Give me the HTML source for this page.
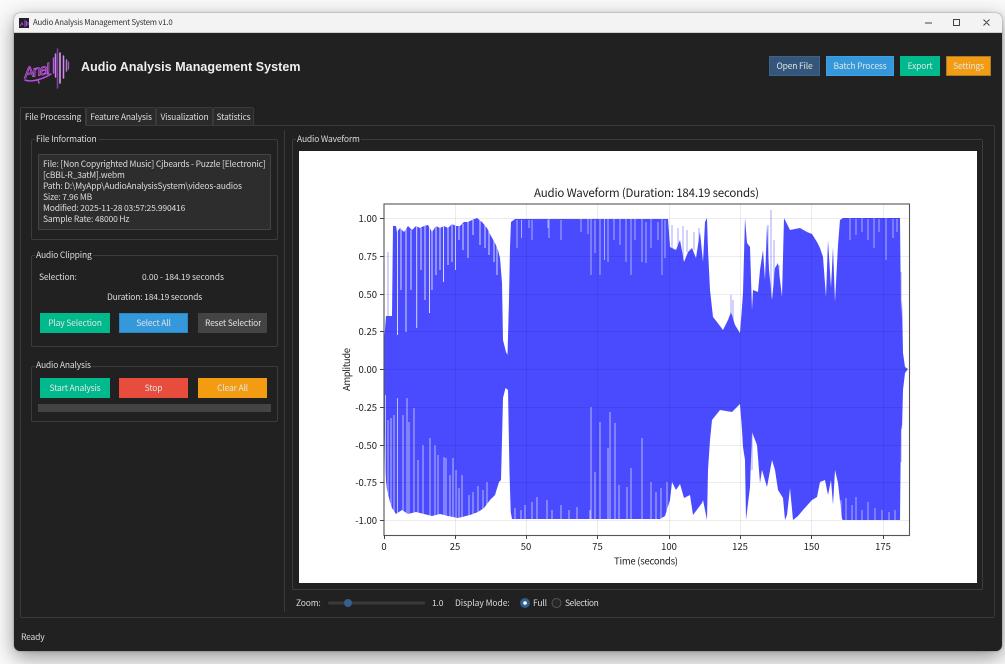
<!DOCTYPE html>
<html lang="en"><head><meta charset="utf-8"><title>Audio Analysis Management System v1.0</title>
<style>
html,body{margin:0;padding:0;width:1005px;height:664px;overflow:hidden;background:#fafafa}
body{position:relative;font-family:"Noto Sans CJK SC","Liberation Sans",sans-serif;font-size:8.5px;letter-spacing:-.17px;color:#dcdcdc;filter:blur(.3px)}
.a{position:absolute;box-sizing:border-box}
.t{position:absolute;white-space:nowrap;line-height:12px;height:12px}
.win{left:13.5px;top:13px;width:988px;height:638px;background:#212121;border-radius:6px;box-shadow:0 6px 20px rgba(0,0,0,.42),0 0 2px rgba(0,0,0,.35)}
.bar{left:13.5px;top:13px;width:988px;height:20px;background:#f3f3f3;border-radius:6px 6px 0 0;border-bottom:1px solid #d0d0d0}
.btn{position:absolute;box-sizing:border-box;height:20px;line-height:21px;text-align:center;color:#dfe6e6;white-space:nowrap;overflow:hidden}
.bd{line-height:19px}
.tab{position:absolute;box-sizing:border-box;top:107px;height:18px;line-height:18px;text-align:center;background:#2a2a2a;border:1px solid #3a3a3a;border-bottom:0;border-radius:2px 2px 0 0;color:#dcdcdc;white-space:nowrap}
.g{position:absolute;box-sizing:border-box;border:1px solid #3c3c3c;border-radius:2px}
.l{position:absolute;background:#212121;padding:0 1px;line-height:12px;white-space:nowrap;color:#dcdcdc}
</style></head><body>
<div class="a win"></div>
<div class="a bar"></div>
<svg class="a" style="left:19px;top:18px" width="10" height="10" viewBox="0 0 10 10"><rect width="10" height="10" fill="#23202a"/><path d="M1 8l2-3 1 2M6 2v7M7.500 3v5M9 4v3" stroke="#a64fd0" stroke-width="1" fill="none"/></svg>
<div class="t" style="left:33px;top:17px;color:#333;font-size:7.8px;letter-spacing:-.2px">Audio Analysis Management System v1.0</div>
<svg class="a" style="left:920px;top:16px" width="75" height="14" viewBox="0 0 75 14" fill="none" stroke="#444"><path d="M5 7h7M33.500 3.500h6v6h-6zM63.500 3.500l6 6m0-6l-6 6"/></svg>

<svg class="a" style="left:20px;top:44px" width="55" height="48" viewBox="20 44 55 48">
<g stroke-linecap="round" fill="none">
<path d="M53.500 58V73" stroke="#b85ae0" stroke-width="1.400"/><path d="M55.500 54V77" stroke="#d080ee" stroke-width="1.500"/><path d="M57.500 49V88" stroke="#7a44a8" stroke-width="1.500"/><path d="M60 53V83" stroke="#e09cf4" stroke-width="1.600"/><path d="M63.500 56V78" stroke="#d48cf0" stroke-width="1.500"/><path d="M66.500 60V71" stroke="#b870dc" stroke-width="1.500"/><path d="M68.500 62V69" stroke="#9a58c0" stroke-width="1.300"/>
<path d="M25 80C32 83 45 78 51 74M38 80l1 3" stroke="#b850dc" stroke-width="1.500"/>
</g>
<text transform="translate(25,78) rotate(-10)" font-family="'Liberation Sans',sans-serif" font-size="15" font-style="italic" fill="none" stroke="#c558e6" stroke-width=".8" textLength="26" letter-spacing="0">Anal</text>
</svg>
<div class="t" style="left:81px;top:59px;height:16px;font:bold 12.500px/16px 'Liberation Sans',sans-serif;color:#f0f0f0;letter-spacing:.06px">Audio Analysis Management System</div>

<div class="btn bd" style="left:769px;top:56px;width:51px;background:#34567a;border:1px solid #3d6288">Open File</div>
<div class="btn bd" style="left:826px;top:56px;width:68px;background:#3498db;border:1px solid #3f9fe0">Batch Process</div>
<div class="btn" style="left:900px;top:56px;width:40px;background:#00b98d">Export</div>
<div class="btn bd" style="left:946px;top:56px;width:45px;background:#f39c12;border:1px solid #a87a30">Settings</div>

<div class="a" style="left:20px;top:125px;width:975px;height:493px;border:1px solid #3a3a3a;border-radius:2px"></div>
<div class="tab" style="left:20px;width:66px;background:#212121;border-bottom:1px solid #212121;height:19px">File Processing</div>
<div class="tab" style="left:86px;width:70px">Feature Analysis</div>
<div class="tab" style="left:156px;width:57px">Visualization</div>
<div class="tab" style="left:213px;width:41px">Statistics</div>

<div class="a" style="left:284px;top:130px;width:1px;height:482px;background:#3a3a3a"></div>

<div class="g" style="left:31px;top:139px;width:247px;height:101px"></div>
<div class="l" style="left:35px;top:133px">File Information</div>
<div class="a" style="left:38px;top:154px;width:233px;height:76px;background:#2d2d2d;border:1px solid #444"></div>
<div class="t" style="left:43px;top:158px">File: [Non Copyrighted Music] Cjbeards - Puzzle [Electronic]</div>
<div class="t" style="left:43px;top:169px">[cBBL-R_3atM].webm</div>
<div class="t" style="left:43px;top:180px">Path: D:\MyApp\AudioAnalysisSystem\videos-audios</div>
<div class="t" style="left:43px;top:191px">Size: 7.96 MB</div>
<div class="t" style="left:43px;top:202px">Modified: 2025-11-28 03:57:25.990416</div>
<div class="t" style="left:43px;top:213px">Sample Rate: 48000 Hz</div>

<div class="g" style="left:31px;top:255px;width:247px;height:92px"></div>
<div class="l" style="left:35px;top:249px">Audio Clipping</div>
<div class="t" style="left:39px;top:271px">Selection:</div>
<div class="t" style="left:142px;top:271px;letter-spacing:-.08px">0.00 - 184.19 seconds</div>
<div class="t" style="left:107px;top:291px">Duration: 184.19 seconds</div>
<div class="btn" style="left:40px;top:313px;width:70px;background:#00b98d">Play Selection</div>
<div class="btn bd" style="left:119px;top:313px;width:69px;background:#3498db;border:1px solid #2e86c1">Select All</div>
<div class="btn" style="left:198px;top:313px;width:69px;background:#444;text-align:left;padding-left:7px"><span style="display:block;width:56px;overflow:hidden">Reset Selection</span></div>

<div class="g" style="left:31px;top:366px;width:247px;height:56px"></div>
<div class="l" style="left:35px;top:359px">Audio Analysis</div>
<div class="btn" style="left:40px;top:378px;width:70px;background:#00b98d">Start Analysis</div>
<div class="btn" style="left:119px;top:378px;width:69px;background:#e74c3c">Stop</div>
<div class="btn" style="left:198px;top:378px;width:69px;background:#f39c12">Clear All</div>
<div class="a" style="left:38px;top:404px;width:233px;height:8px;background:#444"></div>

<div class="g" style="left:292px;top:139px;width:691px;height:451px"></div>
<div class="l" style="left:296px;top:133px">Audio Waveform</div>
<div class="a" style="left:299px;top:151px;width:678px;height:432px;background:#fff"></div>

<svg class="a" style="left:0;top:0;letter-spacing:0" width="1005" height="664" viewBox="0 0 1005 664">
<polygon fill="#4a4aff" points="384,342 386,316 392,316 393,226 396,226 397,232 400,228 404,232 408,226 412,230 416,226 420,228 424,226 428,225 432,232 436,226 440,228 444,226 448,228 452,224 456,226 460,226 464,222 468,222 472,220 477,218 482,222 487,228 491,236 495,243 498,250 500,258 502,283 503,340 506,352 507.500,355 509,300 510,247 511,222 515,219 668,219 670,247 676,250 680,240 684,262 688,252 692,248 696,258 700,232 703,262 705,222 707,218 708,250 710,290 713,317 717,322 723,330 728,320 731,312 735,325 740,333 742,307 743,293 745,218 747,243 750,247 752,310 753,290 758,292 760,270 763,250 765,280 767,225 769,270 772,300 775,268 778,263 782,297 784,218 790,230 800,228 807,232 812,234 817,242 820,248 823,257 826,297 828,240 831,288 833,247 835,302 838,245 840,220 843,218 900,218 901,318 902,300 903,353 905,367 908,369 905,373 903,390 902,430 901,425 900,520 843,520 842,519 838,483 835,470 833,505 831,480 828,495 825,480 820,482 817,497 812,500 803,510 798,516 793,520 790,488 787,515 785,520 783,498 778,490 775,470 772,460 767,487 762,470 760,483 757,445 752,432 750,487 746,520 745,460 743,447 742,430 740,404 732,412 720,410 712,420 710,440 708,470 707,520 703,500 702,503 693,515 690,495 684,498 680,484 676,490 672,482 670,500 665,516 660,519 512,519 510.700,512 509.500,472 508,390 505.500,388 503,398 502,440 501,480 499,482 495,495 490,500 484,508 478,512 470,515 458,518 448,516 440,514 432,516 424,514 416,512 408,514 402,510 396,514 392,508 390,502 387,490 385,472 384,395"/>
<path fill="none" stroke="#fff" stroke-opacity=".78" stroke-width="1" d="M397.500 226V335M401 228V290M406 228V332M411 230V290M416.700 226V328M421 228V270M425 226V300M429.500 225V313M432 228V290M436 226V275M440 228V270M443.500 226V282M448 228V265M452 224V262M455.500 226V270M459 226V240M463 224V250M468 222V258M473 220V235M480 220V245M485 222V248M489 230V255M494 234V262M497 240V275"/>
<path fill="none" stroke="#fff" stroke-opacity=".55" stroke-width="1" d="M517 220V248M521.500 220V238M529 220V228M532 220V240M548 220V228M549 219V238M561 220V240M581 219V232M588 219V234M591 218V275M595 220V253M600 218V275M604.500 219V260M608 218V262M614 218V240M620 218V245M626 218V262M631 218V275M635 219V240M642 218V262M646 222V263M651 219V248M658 222V240M662 218V275M665 220V258"/>
<path fill="none" stroke="#fff" stroke-opacity=".62" stroke-width="1" d="M385.500 520V395M388 520V420M391 520V418M394 520V415M397.500 520V398M403 520V415M407 520V398M409 520V422M414 520V408M418 520V460M423 520V445M430 520V438M435 520V445M438 520V455M444 520V457M446 520V458M450 520V475M453 520V458M456 520V470M459 520V488M462 520V475M469 520V495M473 520V492M478 520V486M483 520V490M487 520V482M515 520V508M521 520V510M525 520V505M532 520V502M537 520V497M547 520V500M552 520V510M561 520V505M569 520V510M577 520V507M590 520V510M591 520V407M595 520V472M600 520V422M608 520V448M610 520V412M615 520V423M619 520V485M627 520V487M631 520V468M642 520V438M651 520V482M656 520V492M661 520V488M667 520V482"/>
<path fill="none" stroke="#fff" stroke-opacity=".55" stroke-width="1" d="M850 218V240M856 219V235M862 218V232M868 219V240M874 218V248M879 219V232M886 218V260M893 219V238M897 219V232M841 519V500M846 520V498M852 520V505M856 520V497M862 520V510M868 520V502M875 520V508M882 520V510M889 520V512M895 520V510"/>
<path fill="none" stroke="#4a4aff" stroke-opacity=".5" stroke-width="1" d="M388 252V316M901 272V318M901 427V462M668 227V240M672 225V250M678 228V250M683 226V262M687 230V252M694 232V250M699 228V258M731 295V320M733 300V330M768 225V270M771 210V300M774 240V310M779 265V300M752 428V470"/>
<g stroke="#000" stroke-opacity=".075" stroke-width="1" fill="none">
<path d="M384 218.500H910M384 256.500H910M384 294.500H910M384 331.500H910M384 369.500H910M384 407.500H910M384 445.500H910M384 482.500H910M384 520.500H910"/>
<path d="M455.500 204V535M526.500 204V535M597.500 204V535M669.500 204V535M740.500 204V535M811.500 204V535M883.500 204V535"/>
</g>
<rect x="384" y="204" width="525.500" height="331.500" fill="none" stroke="#555" stroke-width="1.100"/>
<path stroke="#444" stroke-width="1" fill="none" d="M380 218.500h4M380 256.500h4M380 294.500h4M380 331.500h4M380 369.500h4M380 407.500h4M380 445.500h4M380 482.500h4M380 520.500h4M384.500 535v4M455.500 535v4M526.500 535v4M597.500 535v4M669.500 535v4M740.500 535v4M811.500 535v4M883.500 535v4"/>
<g font-family="'Noto Sans CJK SC','Liberation Sans',sans-serif" fill="#222" font-size="9.500">
<text x="534" y="197" font-size="11.500" textLength="225">Audio Waveform (Duration: 184.19 seconds)</text>
<g text-anchor="end">
<text x="377" y="222">1.00</text><text x="377" y="260">0.75</text><text x="377" y="298">0.50</text><text x="377" y="335">0.25</text><text x="377" y="373">0.00</text><text x="377" y="411">-0.25</text><text x="377" y="449">-0.50</text><text x="377" y="486">-0.75</text><text x="377" y="524">-1.00</text>
</g>
<g text-anchor="middle">
<text x="384" y="550">0</text><text x="455" y="550">25</text><text x="526" y="550">50</text><text x="597.500" y="550">75</text><text x="669" y="550">100</text><text x="740" y="550">125</text><text x="811.500" y="550">150</text><text x="883" y="550">175</text>
</g>
<text x="614" y="564.500" font-size="9.500" textLength="64">Time (seconds)</text>
<text transform="translate(350,391) rotate(-90)" font-size="9.500" textLength="43">Amplitude</text>
</g>
<rect x="328" y="601.500" width="97" height="3" rx="1.500" fill="#3a3a3a"/>
<circle cx="348" cy="603" r="4" fill="#34608c"/>
<circle cx="525" cy="603" r="4.500" fill="#34608c" stroke="#2f5a84"/><circle cx="525" cy="603" r="1.800" fill="#fff"/>
<circle cx="556.500" cy="603" r="4.500" fill="#262626" stroke="#555"/>
</svg>

<div class="t" style="left:296px;top:597px">Zoom:</div>
<div class="t" style="left:432px;top:597px">1.0</div>
<div class="t" style="left:455px;top:597px;letter-spacing:-.05px">Display Mode:</div>
<div class="t" style="left:533px;top:597px">Full</div>
<div class="t" style="left:565px;top:597px;letter-spacing:-.4px">Selection</div>
<div class="t" style="left:21px;top:631px">Ready</div>
</body></html>
